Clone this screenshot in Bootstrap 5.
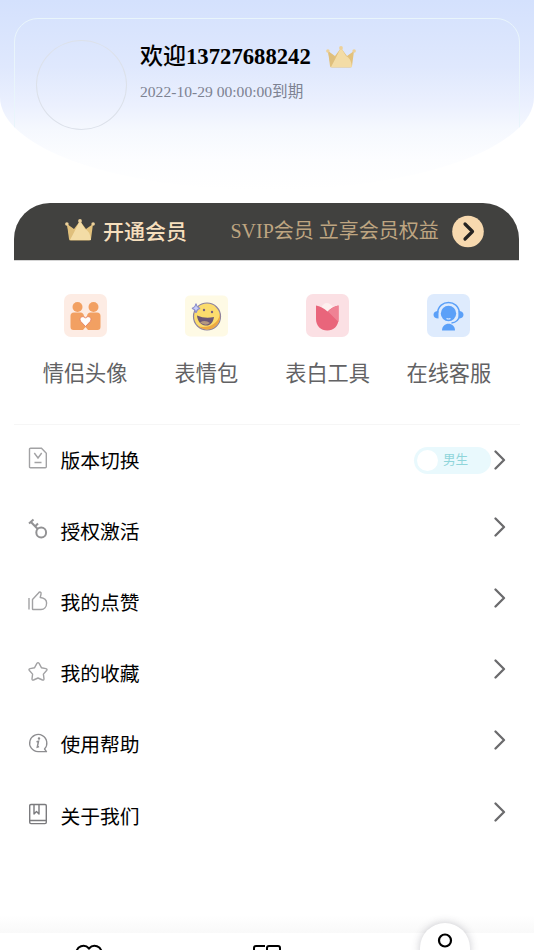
<!DOCTYPE html>
<html lang="zh-CN">
<head>
<meta charset="utf-8">
<meta name="viewport" content="width=device-width, initial-scale=1">
<title>我的</title>
<link href="https://cdn.jsdelivr.net/npm/bootstrap@5.3.0/dist/css/bootstrap.min.css" rel="stylesheet">
<style>
body{font-family:"Liberation Serif","Noto Sans CJK SC",serif;color:#000;line-height:1}
.screen{height:950px}
.hero{height:190px;padding:18px 14px 0;background:linear-gradient(#d4e1fd 0,#dfe8fd 35%,#ebf0fe 55%,#f5f8fe 68%,#fcfdff 84%,#fff 100%);border-radius:0 0 267px 267px/0 0 93px 93px}
.profile{height:190px;border:1px solid #e9f5fb;border-radius:24px;padding:21px 0 0 21px}
.avatar{width:91px;height:90px;border:1px solid #dce1ea}
.who{margin-left:13px;padding-top:4px}
.name{font-size:22.7px;line-height:26px;font-weight:700}
.name-zh{font-weight:500;font-size:23px}
.expire{font-size:15.6px;line-height:20px;color:#7d8292;margin-top:12px}
.crown-a{margin:2px 0 0 15px}
.vip{margin:13px 15px 0 14px;height:57px;background:#41413f;border-radius:36px 36px 0 0;padding-left:51px;box-shadow:0 1px 0 #d5d5d5}
.vip-title{font-size:21px;font-weight:500;color:#f6dfbd;margin-left:8px;width:127.5px;line-height:28px}
.vip-desc{font-size:20px;color:#bea581;width:221.500px;line-height:28px;margin-top:-1px}
.tools{margin:0 14px;padding:34px 10.5px 0;height:165px;border-bottom:1px solid #f6f6f6}
.tool{font-size:21.2px;color:#626264}
.tool span{line-height:28px;margin-top:23px}
.entry{height:71.2px;padding:0 28px 0 27px}
.entry-label{font-size:19.8px;line-height:28px;margin-left:11.5px}
.up{margin-top:-4px}
.up2{margin-top:-6px}
.chev{margin-top:-10px}
.first .chev{margin-top:-2px}
.switcher{width:77px;height:27px;background:#e9f9fd;font-size:12.6px;color:#8fd5da;padding:3px;margin:-1px 3px 0 0}
.knob{width:21px;height:21px;background:#fff;margin-right:5px}
.tabs{height:17px;background:#fff}
.tabs::before{content:"";position:absolute;left:0;right:0;top:-18px;height:18px;background:linear-gradient(#fff,#f9f9f9)}
.bubble{left:420px;top:-10px;width:50px;height:50px;background:#fff;box-shadow:0 0 9px rgba(60,60,80,.28)}
</style>
<script src="https://cdn.jsdelivr.net/npm/bootstrap@5.3.0/dist/js/bootstrap.bundle.min.js"></script>
</head>
<body>
<svg class="d-none" xmlns="http://www.w3.org/2000/svg">
<symbol id="crown" viewBox="0 0 30 22">
<path d="M2 5l7 5 6-8 6 8 7-5-2 15q0 1.500-2 1.500H6q-2 0-2-1.500z" fill="#e3c27c"/>
<path d="M15 2L6 21h18z" fill="#f5dfaa"/><path d="M2 5l12 11-9 5z" fill="#dfbf7c"/><path d="M15 2L5 21h21q-1-9-6-11z" fill="#f3dca6"/>
<g fill="#edd19a"><circle cx="15" cy="2" r="1.9"/><circle cx="1.9" cy="5" r="1.8"/><circle cx="28.1" cy="5" r="1.8"/></g>
</symbol>
<symbol id="chev" viewBox="0 0 12 20"><path d="M1.500 1.500L10 10l-8.500 8.500" fill="none" stroke="#6b6b6d" stroke-width="2.300" stroke-linecap="round" stroke-linejoin="round"/></symbol>
</svg>
<div class="screen position-relative overflow-hidden d-flex flex-column">
<header class="hero overflow-hidden flex-shrink-0">
<div class="profile d-flex align-items-start">
<div class="avatar rounded-circle flex-shrink-0"></div>
<div class="who">
<div class="d-flex"><div class="name"><span class="name-zh">欢迎</span>13727688242</div><svg class="crown-a" width="30" height="22"><use href="#crown"/></svg></div>
<div class="expire">2022-10-29 00:00:00到期</div>
</div>
</div>
</header>
<section class="vip d-flex align-items-center flex-shrink-0">
<svg class="up" width="30" height="22"><use href="#crown"/></svg>
<div class="vip-title">开通会员</div>
<div class="vip-desc text-nowrap">SVIP会员 立享会员权益</div>
<svg width="32" height="33" viewBox="0 0 32 33"><circle cx="16" cy="16.500" r="15.800" fill="#f7d9af"/><path d="M13 9l7.500 7.500L13 24" fill="none" stroke="#252321" stroke-width="3.200" stroke-linecap="round" stroke-linejoin="round"/></svg>
</section>
<section class="tools flex-shrink-0">
<div class="row g-0 text-center">
<div class="tool col-3 d-flex flex-column align-items-center">
<svg width="43" height="43" viewBox="0 0 43 43"><rect width="43" height="43" rx="7" fill="#fdece4"/><g fill="#f2a062"><circle cx="13.500" cy="13" r="5"/><circle cx="29.500" cy="13" r="5"/><path d="M6.500 22q0-3.500 3.500-3.500h6.500q3 0 3.500 3.500l1.500 2 1.500-2q.5-3.500 3.500-3.500H33q3.500 0 3.500 3.500v11q0 3-3 3H24L21.500 33 19 36H9.500q-3 0-3-3z"/></g><path d="M21.500 32.500l-5-5.300c-2.200-4 3-6.200 5-3 2-3.200 7.200-1 5 3z" fill="#fff" stroke="#e88767"/></svg>
<span>情侣头像</span></div>
<div class="tool col-3 d-flex flex-column align-items-center">
<svg width="43" height="43" viewBox="0 0 43 43"><rect y="1.500" width="43" height="41" rx="5" fill="#fefae5"/><circle cx="22" cy="22.500" r="13.500" fill="#fbdc6d" stroke="#8d82a0" stroke-width="1.200"/><path d="M35 20a13.200 13.200 0 0 1-22 12c8 3 20-1 22-12z" fill="#eeaa42"/><path d="M12 21.500q8 3.500 17 1.500c-1 6-4 9-8.500 8.500-5-.5-8-4.500-8.500-10z" fill="#6b5775"/><path d="M15 28.500q5-3 10 .5-4.500 3.500-10-.5z" fill="#b5987f"/><circle cx="19" cy="16" r="1.200" fill="#786383"/><circle cx="27" cy="18" r="1.200" fill="#786383"/><path d="M11 9.500q.8 4 4 4.800-3.200.8-4 4.700-.8-3.900-4-4.700 3.200-.8 4-4.800z" fill="#c6cdfa" stroke="#8d8fca" stroke-width="1.200"/></svg>
<span>表情包</span></div>
<div class="tool col-3 d-flex flex-column align-items-center">
<svg width="43" height="43" viewBox="0 0 43 43"><rect width="43" height="43" rx="7" fill="#fbe0e4"/><path d="M15 14q5-10 13 0l-6 9z" fill="#fdf0ef"/><path d="M10 11.500q6 1 11.500 6 5-5 11-6V25c0 7-5 11.500-11.200 11.500S10 32 10 25z" fill="#e9657b"/><path d="M22 17.500q5-5 10.500-6V28z" fill="#ef8294"/></svg>
<span>表白工具</span></div>
<div class="tool col-3 d-flex flex-column align-items-center">
<svg width="43" height="43" viewBox="0 0 43 43"><rect width="43" height="43" rx="7" fill="#deebfd"/><g fill="#5ba0f8"><circle cx="21.500" cy="19.500" r="7.700"/><path d="M15 36.500c0-9 13-9 13 0z"/><path d="M11.500 17v7.500q-5 0-5-3.700t5-3.800zM31.500 17v7.500q5 0 5-3.700t-5-3.800z"/></g><path d="M10.500 19C11.500 5 31.500 5 32.500 19v3q-1 6-8 7" fill="none" stroke="#5ba0f8" stroke-width="1.500"/><path d="M19.500 24.500q2 1 4 0" stroke="#deebfd" fill="none" stroke-width="1.200"/></svg>
<span>在线客服</span></div>
</div>
</section>
<main>
<div class="entry first d-flex align-items-center">
<svg class="up2" width="22" height="22" viewBox="0 0 22 22" fill="none" stroke="#a2a2a4" stroke-width="1.400"><path d="M3.500 1.200h11l4.800 5v13.500q0 1-1 1h-14.800q-1 0-1-1V2.200q0-1 1-1zM7.300 6l3.700 5 3.700-5M7.500 15.500h7"/></svg>
<div class="entry-label me-auto">版本切换</div>
<div class="switcher rounded-pill d-flex align-items-center"><div class="knob rounded-circle"></div>男生</div>
<svg class="chev" width="12" height="20"><use href="#chev"/></svg></div>
<div class="entry d-flex align-items-center">
<svg class="up2" width="22" height="22" viewBox="0 0 22 22" fill="none" stroke="#929294" stroke-width="2"><circle cx="14.200" cy="14.500" r="4.900"/><path d="M10.700 11L3.200 3.200M8 8.500L11 5.500M2 5.500L6.500 1.500"/></svg>
<div class="entry-label me-auto">授权激活</div><svg class="chev" width="12" height="20"><use href="#chev"/></svg></div>
<div class="entry d-flex align-items-center">
<svg class="up" width="22" height="22" viewBox="0 0 22 22" fill="none" stroke="#a2a2a4" stroke-width="1.400" stroke-linejoin="round"><path d="M2 8v11.500M5.500 19V9.500L11.500 3c1.200-1.800 3.100-.9 2.500 1.300L13.200 7.500c4.500.5 6.400 2.500 6.400 5.500 0 4-2.500 6.500-5.600 6.500H6q-.5 0-.5-.5z"/></svg>
<div class="entry-label me-auto">我的点赞</div><svg class="chev" width="12" height="20"><use href="#chev"/></svg></div>
<div class="entry d-flex align-items-center">
<svg class="up" width="22" height="22" viewBox="0 0 22 22" fill="none" stroke="#a2a2a4" stroke-width="1.400" stroke-linejoin="round"><path d="M9.900 2.400q1.100-1.600 2.200 0l2.300 4.300 4.500.9q1.800.5.700 1.900l-3.200 3.600.6 4.700q0 1.700-1.500 1.200L11 17l-4.500 2q-1.500.5-1.500-1.200l.6-4.700L2.400 9.500q-1.100-1.400.7-1.900l4.500-.9z"/></svg>
<div class="entry-label me-auto">我的收藏</div><svg class="chev" width="12" height="20"><use href="#chev"/></svg></div>
<div class="entry d-flex align-items-center">
<svg class="up" width="22" height="22" viewBox="0 0 22 22" fill="none" stroke="#8d8d90" stroke-width="1.300"><path d="M11 19.700A8.600 8.600 0 1 1 17.500 17l2 2.700z" stroke-linejoin="round"/><path d="M9.500 9.700l2-.5-1.200 6 1.800-.6" stroke-width="1.500"/><circle cx="12" cy="6.500" r=".6" fill="#777"/></svg>
<div class="entry-label me-auto">使用帮助</div><svg class="chev" width="12" height="20"><use href="#chev"/></svg></div>
<div class="entry d-flex align-items-center">
<svg class="up2" width="22" height="22" viewBox="0 0 22 22" fill="none" stroke="#7b7b7e" stroke-width="1.400" stroke-linejoin="round"><path d="M4 1.500h14q1.300 0 1.300 1.300v16.500q0 1.300-1.300 1.300H4q-1.300 0-1.300-1.300V2.800q0-1.300 1.300-1.300zM2.700 17.500h16.600M7 1.500V11l2.500-2.500L12 11V1.500"/></svg>
<div class="entry-label me-auto">关于我们</div><svg class="chev" width="12" height="20"><use href="#chev"/></svg></div>
</main>
<nav class="tabs mt-auto position-relative flex-shrink-0">
<div class="row g-0 pt-2 h-100">
<div class="col-4 text-center"><svg width="30" height="9" viewBox="0 0 30 9" class="d-block mx-auto"><path d="M2 14C2 4 11 3 15 7.500 19 3 28 4 28 14" fill="none" stroke="#000" stroke-width="2"/></svg></div>
<div class="col-4"><svg width="30" height="9" viewBox="0 0 30 9" class="d-block mx-auto"><path d="M2 10V7q0-2 2-2h9M15 10V7q0-2 2-2h9q2 0 2 2v3" fill="none" stroke="#000" stroke-width="2"/></svg></div>
</div>
<div class="bubble rounded-circle position-absolute d-flex justify-content-center"><svg width="30" height="40" viewBox="0 0 30 40"><circle cx="15" cy="17.500" r="6" fill="none" stroke="#000" stroke-width="2.200"/><path d="M4 36q0-8 11-8t11 8" fill="none" stroke="#000" stroke-width="2"/></svg></div>
</nav>
</div>
</body>
</html>
